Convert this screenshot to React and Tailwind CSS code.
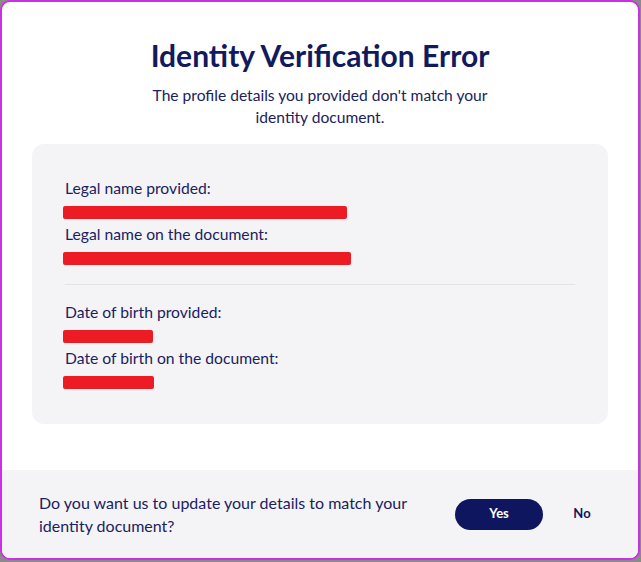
const Redacted = ({ width }) => (
    <div className="h-[24px] pt-[7px]">
        <div className="-ml-[2px] h-[13px] bg-[#ed1c24] rounded-[2px]" style={{ width }} />
    </div>
);

const Field = ({ label, width }) => (
    <div>
        <p className="text-[15.7px] leading-[22px] text-[#1b2160]">{label}</p>
        <Redacted width={width} />
    </div>
);

export default function App() {
    return (
        <div className="w-[641px] h-[562px] bg-[#8a8a8a]" style={{ fontFamily: 'Lato, "Open Sans", sans-serif' }}>
            <div className="w-[640px] h-[560px] bg-white border-2 border-[#cc30e4] rounded-[10px] overflow-hidden flex flex-col">
                <div className="flex-1 flex flex-col items-center pt-[35px]">
                    <h1 className="text-[30px] leading-[36px] font-bold text-[#121a5e]">
                        Identity Verification Error
                    </h1>
                    <p className="mt-[11px] w-[360px] text-center text-[15.6px] leading-[22px] text-[#1b2160]">
                        The profile details you provided don't match your identity document.
                    </p>
                    <div className="mt-[16px] w-[576px] h-[280px] bg-[#f4f4f6] rounded-[12px] px-[33px] pt-[33px]">
                        <Field label="Legal name provided:" width={284} />
                        <Field label="Legal name on the document:" width={288} />
                        <div className="mt-[15px] mb-[16px] h-px bg-[#e3e3e8]" />
                        <Field label="Date of birth provided:" width={90} />
                        <Field label="Date of birth on the document:" width={91} />
                    </div>
                </div>
                <div className="h-[88px] bg-[#f4f4f6] flex items-center pl-[37px] pr-[28px]">
                    <p className="w-[390px] text-[16px] leading-[23px] text-[#1b2160]">
                        Do you want us to update your details to match your identity document?
                    </p>
                    <button className="ml-auto w-[88px] h-[31px] rounded-full bg-[#0f1660] text-white text-[13px] font-bold">
                        Yes
                    </button>
                    <button className="ml-[11px] w-[56px] h-[31px] text-[13px] font-bold text-[#0f1660]">
                        No
                    </button>
                </div>
            </div>
        </div>
    );
}
